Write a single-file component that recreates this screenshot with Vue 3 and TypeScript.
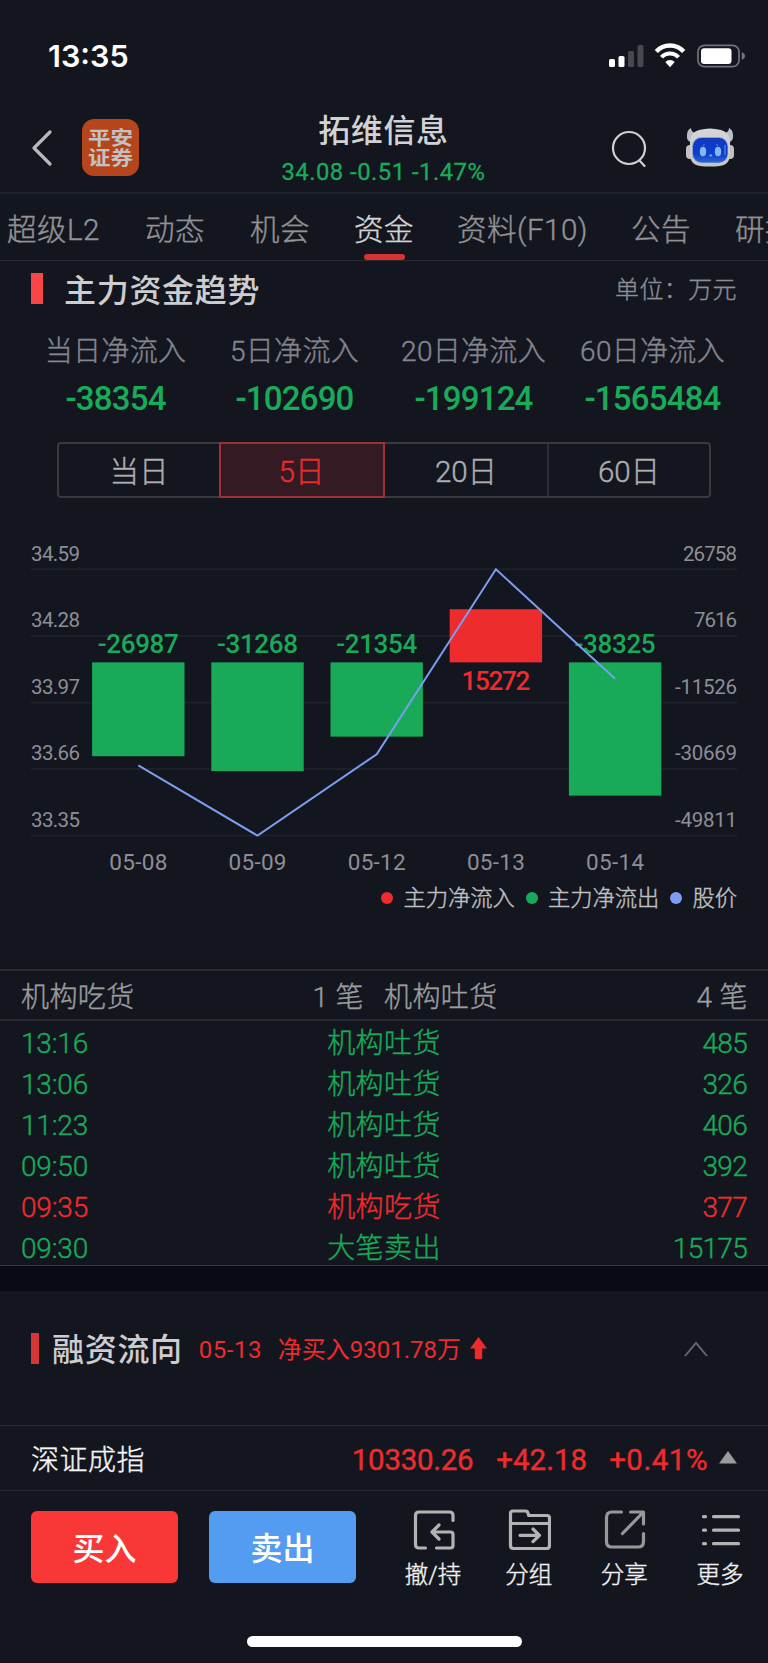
<script setup lang="ts">
interface Stat { label: string; value: string }
interface Bar { date: string; value: number; price: number; labelWidth: number }
interface Deal { time: string; name: string; amount: number; buy?: boolean }

const tabs = [
  { name: '超级L2', width: 93 },
  { name: '动态', width: 60 },
  { name: '机会', width: 59 },
  { name: '资金', width: 58 },
  { name: '资料(F10)', width: 129 },
  { name: '公告', width: 59 },
  { name: '研报', width: 60 },
]
const activeTab = '资金'

const stats: Stat[] = [
  { label: '当日净流入', value: '-38354' },
  { label: '5日净流入', value: '-102690' },
  { label: '20日净流入', value: '-199124' },
  { label: '60日净流入', value: '-1565484' },
]

const ranges = ['当日', '5日', '20日', '60日']
const activeRange = '5日'

const bars: Bar[] = [
  { date: '05-08', value: -26987, price: 33.677, labelWidth: 81 },
  { date: '05-09', value: -31268, price: 33.35, labelWidth: 81 },
  { date: '05-12', value: -21354, price: 33.729, labelWidth: 81 },
  { date: '05-13', value: 15272, price: 34.59, labelWidth: 69 },
  { date: '05-14', value: -38325, price: 34.08, labelWidth: 81 },
]
const axis = [
  { left: '34.59', right: '26758', width: 54 },
  { left: '34.28', right: '7616', width: 43 },
  { left: '33.97', right: '-11526', width: 62 },
  { left: '33.66', right: '-30669', width: 62 },
  { left: '33.35', right: '-49811', width: 62 },
]
const plotTop = 39.3
const plotHeight = 266.3
const rowY = (i: number) => plotTop + (plotHeight / 4) * i
const flowY = (v: number) => plotTop + ((26758 - v) / (26758 + 49811)) * plotHeight
const priceY = (p: number) => plotTop + ((34.59 - p) / 1.24) * plotHeight
const barX = (i: number) => 138.3 + i * 119.2
const zeroY = flowY(0)
const pricePoints = bars.map((b, i) => `${barX(i)},${priceY(b.price)}`).join(' ')

const deals: Deal[] = [
  { time: '13:16', name: '机构吐货', amount: 485 },
  { time: '13:06', name: '机构吐货', amount: 326 },
  { time: '11:23', name: '机构吐货', amount: 406 },
  { time: '09:50', name: '机构吐货', amount: 392 },
  { time: '09:35', name: '机构吃货', amount: 377, buy: true },
  { time: '09:30', name: '大笔卖出', amount: 15175 },
]
</script>

<template>
  <div class="app">
    <div class="status">
      <span class="clock">13:35</span>
      <svg class="status-icons" width="140" height="28" viewBox="0 0 140 28">
        <g fill="#fff">
          <rect x="1" y="17" width="6" height="8" rx="1.600" />
          <rect x="10.500" y="14" width="6" height="11" rx="1.600" />
          <rect x="20" y="9" width="6" height="16" rx="1.600" opacity=".22" />
          <rect x="29.500" y="3" width="6" height="22" rx="1.600" opacity=".22" />
        </g>
        <g fill="none" stroke="#fff">
          <path d="M48.300 9.600a18.500 18.500 0 0 1 27.400 0" stroke-width="4.400" />
          <path d="M53.500 15.300a11.200 11.200 0 0 1 17 0" stroke-width="4" />
        </g>
        <path d="M57.300 19.900a6.700 6.700 0 0 1 9.400 0L62 25.200Z" fill="#fff" />
        <rect x="90" y="3.300" width="41" height="21.400" rx="6.500" fill="none" stroke="#70727a" stroke-width="1.700" />
        <rect x="93" y="6.300" width="30.500" height="15.600" rx="3.200" fill="#fff" />
        <path d="M133.700 10.200q3.300 1 3.300 3.800t-3.300 3.800Z" fill="#70727a" />
      </svg>
    </div>

    <header class="header">
      <svg class="back" width="24" height="40" viewBox="0 0 24 40">
        <path d="M20 4 4 20l16 16" fill="none" stroke="#b9b9bb" stroke-width="3.200" stroke-linecap="round" stroke-linejoin="round" />
      </svg>
      <div class="logo"><p>平安<br>证券</p></div>
      <div class="stock">
        <h1>拓维信息</h1>
        <p>34.08 -0.51 -1.47%</p>
      </div>
      <svg class="search" width="38" height="40" viewBox="0 0 38 40">
        <g fill="none" stroke="#d0d0d2" stroke-width="2.200" stroke-linecap="round">
          <circle cx="18" cy="19" r="16" />
          <path d="m28.500 31.500 5 5.500" />
        </g>
      </svg>
      <svg class="robot" width="50" height="42" viewBox="0 0 50 42">
        <defs>
          <linearGradient id="face" x1="0" y1="0" x2="0" y2="1">
            <stop offset="0" stop-color="#1238c0" />
            <stop offset=".65" stop-color="#0b3fd0" />
            <stop offset="1" stop-color="#2b66d2" />
          </linearGradient>
          <linearGradient id="shell" x1="0" y1="0" x2="0" y2="1">
            <stop offset="0" stop-color="#d6d6d8" />
            <stop offset="1" stop-color="#c6c4c6" />
          </linearGradient>
        </defs>
        <rect x="1" y="18" width="9" height="14" rx="4" fill="#c6bfc1" />
        <rect x="40" y="18" width="9" height="14" rx="4" fill="#c6bfc1" />
        <path d="M2 8Q2 3 6 1 6 6 12 6L9 15Q1 16 2 8ZM48 8Q48 3 44 1 44 6 38 6l3 9q8 1 7-7Z" fill="#b9c0c4" />
        <path d="M14 3Q25 0 36 3 44 5 45 14V29Q44 38 35 39 25 40 15 39 6 38 5 29V14Q6 5 14 3Z" fill="url(#shell)" />
        <rect x="7" y="10" width="36" height="26" rx="9.500" fill="#8ca0c8" />
        <rect x="8" y="11" width="34.500" height="24.500" rx="8.500" fill="url(#face)" />
        <ellipse cx="18" cy="24.500" rx="3.200" ry="4.800" fill="#83b8ed" />
        <ellipse cx="33" cy="24.500" rx="3.200" ry="4.800" fill="#83b8ed" />
        <path d="m18 18.500 1.500-1M31.500 17.500l1.500 1M24.500 28h2.500l-1.200 1.500Z" stroke="#83b8ed" fill="#83b8ed" stroke-width=".8" />
        <path d="M40 18v10" stroke="#4d79df" stroke-width="1.500" />
      </svg>
    </header>

    <nav class="tabs">
      <span
        v-for="t in tabs"
        :key="t.name"
        class="tab"
        :class="{ active: t.name === activeTab }"
        :style="{ width: t.width + 'px' }"
      >{{ t.name }}</span>
    </nav>

    <section class="trend">
      <div class="trend-head">
        <i class="mark"></i>
        <h2>主力资金趋势</h2>
        <span class="unit">单位：万元</span>
      </div>

      <div class="stats">
        <div v-for="s in stats" :key="s.label" class="stat">
          <span class="stat-label">{{ s.label }}</span>
          <span class="stat-value">{{ s.value }}</span>
        </div>
      </div>

      <div class="segments">
        <span v-for="r in ranges" :key="r" class="segment" :class="{ active: r === activeRange }">{{ r }}</span>
      </div>

      <svg class="chart" width="768" height="350" viewBox="0 0 768 350">
        <g v-for="(a, i) in axis" :key="a.left">
          <line x1="31" x2="737" :y1="rowY(i)" :y2="rowY(i)" class="grid" />
          <text x="31" :y="rowY(i) - 8.800" textLength="49" class="axis">{{ a.left }}</text>
          <text :x="737 - a.width" :y="rowY(i) - 8.800" :textLength="a.width" class="axis">{{ a.right }}</text>
        </g>
        <g v-for="(b, i) in bars" :key="b.date">
          <rect
            :x="barX(i) - 46.200"
            :y="Math.min(zeroY, flowY(b.value))"
            width="92.400"
            :height="Math.abs(flowY(b.value) - zeroY)"
            :class="b.value > 0 ? 'in' : 'out'"
          />
          <text
            :x="barX(i) - b.labelWidth / 2"
            :y="b.value > 0 ? 160 : 123"
            :textLength="b.labelWidth"
            class="bar-label"
            :class="b.value > 0 ? 'in' : 'out'"
          >{{ b.value }}</text>
          <text :x="barX(i) - 29" y="339.500" textLength="58" class="date">{{ b.date }}</text>
        </g>
        <polyline :points="pricePoints" class="price" />
      </svg>

      <div class="legend">
        <span class="key red">主力净流入</span>
        <span class="key green">主力净流出</span>
        <span class="key blue">股价</span>
      </div>
    </section>

    <section class="deals">
      <div class="deals-head">
        <div><span>机构吃货</span><span>1 笔</span></div>
        <div><span>机构吐货</span><span>4 笔</span></div>
      </div>
      <div v-for="d in deals" :key="d.time" class="deal" :class="{ buy: d.buy }">
        <span class="time">{{ d.time }}</span>
        <span class="name">{{ d.name }}</span>
        <span class="amount">{{ d.amount }}</span>
      </div>
    </section>

    <section class="margin">
      <i class="mark"></i>
      <h2>融资流向</h2>
      <span class="margin-date">05-13</span>
      <span class="margin-text">净买入9301.78万</span>
      <svg class="up" width="17" height="23" viewBox="0 0 17 23">
        <path d="M8.500 0 17 11.500h-4.800V21q0 1-1 1H5.800q-1 0-1-1v-9.500H0Z" fill="#ee2b2b" />
      </svg>
      <svg class="fold" width="24" height="18" viewBox="0 0 24 18">
        <path d="M1 16 12 3l11 13" fill="none" stroke="#666771" stroke-width="1.900" />
      </svg>
    </section>

    <div class="index">
      <span class="index-name">深证成指</span>
      <span class="index-num a">10330.26</span>
      <span class="index-num b">+42.18</span>
      <span class="index-num c">+0.41%</span>
      <svg width="18" height="13" viewBox="0 0 18 13"><path d="M9 0l9 12.500H0Z" fill="#9b9b9b" /></svg>
    </div>

    <footer class="footer">
      <button class="trade buy-btn">买入</button>
      <button class="trade sell-btn">卖出</button>
      <div class="actions">
        <div class="action">
          <svg width="44" height="42" viewBox="-1.500 -.5 44 42">
            <path d="M40.500 11V6q0-3.500-3.500-3.500H6.500Q3 2.500 3 6v29q0 3.500 3.500 3.500H13M24 38.500h14q2.500 0 2.500-2.500V25q0-2.500-2.500-2.500H20M26.500 15.500l-7 7 7 7" />
          </svg>
          <span>撤/持</span>
        </div>
        <div class="action">
          <svg width="44" height="42" viewBox="-1 -.5 44 42">
            <path d="M2.500 36V4q0-2.500 2.500-2.500h12.500q2 0 2.500 2l.7 2.500H39q2.500 0 2.500 2.500V36q0 3-3 3h-33q-3 0-3-3ZM2.500 14h39M12 25.800h19.500M25 19.500l6.500 6.300-6.500 6.300" />
          </svg>
          <span>分组</span>
        </div>
        <div class="action">
          <svg class="dim" width="44" height="42" viewBox="-1 -.5 44 42">
            <path d="M18.500 2.500H9Q3.500 2.500 3.500 8v24q0 5.500 5.500 5.500h26q5.500 0 5.500-5.500v-8M27.500 2.500h13v12M40 3 19.500 24" />
          </svg>
          <span>分享</span>
        </div>
        <div class="action">
          <svg width="44" height="42" viewBox="-.5 -.5 44 42">
            <path d="M5 7.200h2M15 7.200h25M5 20.700h2M15 20.700h25M5 34.200h2M15 34.200h25" />
          </svg>
          <span>更多</span>
        </div>
      </div>
      <i class="home"></i>
    </footer>
  </div>
</template>

<style>
html, body { background: #13161f; }
</style>

<style scoped>
.app {
  width: 768px;
  height: 1663px;
  overflow: hidden;
  background: #13161f;
  color: #c9c9cb;
  font-family: Roboto, "Noto Sans CJK SC", sans-serif;
  font-weight: 300;
  line-height: 1;
  white-space: nowrap;
  -webkit-text-stroke: .4px;
}
.app * { box-sizing: border-box; }
h1, h2, p { margin: 0; }
svg { display: block; flex: none; }
span { flex: none; }
i { display: block; flex: none; }

.status {
  display: flex;
  justify-content: space-between;
  align-items: center;
  height: 112px;
  padding: 0 20px 0 48px;
}
.clock { font: 600 30.5px/1 Inter, sans-serif; color: #fff; -webkit-text-stroke: 0; }

.header {
  display: flex;
  align-items: center;
  height: 82px;
  padding: 0 33px 8px 30px;
  border-bottom: 2px solid #1e212e;
}
.logo {
  display: flex;
  flex-direction: column;
  justify-content: center;
  width: 57px;
  height: 57px;
  margin: -1px 0 0 28px;
  border-radius: 12px;
  background: #b5461b;
  color: #c4c1c3;
  font-size: 22.500px;
  font-weight: 700;
  text-align: center;
  -webkit-text-stroke: 0;
}
.logo p { line-height: 23px; transform: scaleY(.87); }
.stock { width: 260px; margin-left: 115px; text-align: center; -webkit-text-stroke: 0; }
.stock h1 {
  margin-top: -1px;
  font-size: 32px;
  font-weight: 500;
  line-height: 48px;
  letter-spacing: .6px;
  color: #d2d2d4;
}
.stock p {
  font-size: 23.800px;
  font-weight: 400;
  line-height: 34px;
  letter-spacing: .5px;
  color: #18ac5a;
  -webkit-text-stroke: .3px;
}
.search { margin-left: 98px; margin-top: 1px; }
.robot { margin-left: 36px; }

.tabs {
  display: flex;
  gap: 45px;
  height: 67px;
  padding-left: 7px;
  overflow: hidden;
  border-bottom: 1px solid #2a2d34;
}
.tab {
  font-size: 29.500px;
  letter-spacing: .5px;
  line-height: 72px;
  color: #929294;
}
.tab.active { position: relative; color: #d4d4d6; }
.tab.active::after {
  content: "";
  position: absolute;
  left: 10px;
  top: 60px;
  width: 41px;
  height: 6px;
  border-radius: 3px;
  background: #d83134;
}

h2 {
  font-size: 32px;
  font-weight: 500;
  letter-spacing: .7px;
  color: #cdcdd0;
  -webkit-text-stroke: 0;
}
.trend { height: 708px; }
.trend-head {
  display: flex;
  align-items: center;
  height: 55px;
  padding: 0 31px;
}
.mark { width: 12px; height: 31px; background: #f84545; }
.trend-head h2 { margin-left: 21px; padding-top: 5px; }
.unit { margin-left: auto; padding-top: 3px; font-size: 24px; letter-spacing: .4px; color: #8d8d95; }

.stats { display: flex; height: 126px; padding: 17px 26px 0; }
.stat { display: flex; flex-direction: column; align-items: center; width: 179px; }
.stat-label { font-size: 28px; line-height: 38px; letter-spacing: .3px; color: #85858e; }
.stat-value {
  margin-top: 8px;
  font-size: 33px;
  font-weight: 500;
  line-height: 40px;
  letter-spacing: -.8px;
  color: #18ac5a;
  -webkit-text-stroke: 0;
}

.segments {
  display: flex;
  width: 654px;
  height: 56px;
  margin-left: 57px;
  border: 2px solid #393a3e;
  border-radius: 4px;
}
.segment {
  width: 161px;
  padding-right: 1px;
  font-size: 29.500px;
  line-height: 56px;
  text-align: center;
  color: #aeaeb0;
}
.segment + .segment { width: 163px; border-left: 2px solid #2c2e35; }
.segment:nth-child(3) { border-left-color: transparent; }
.segment + .segment.active {
  width: 166px;
  margin: -2px -1px;
  border: 2px solid #a03037;
  background: #341a22;
  color: #ee2b2d;
  position: relative;
}

.chart { margin-top: 32px; }
.chart text { font-weight: 400; -webkit-text-stroke: 0; }
.grid { stroke: #1e2029; stroke-width: 2; }
.axis { font-size: 20.500px; fill: #8e8e96; }
.date { font-size: 22.500px; fill: #8e8e96; }
.chart .bar-label { font-size: 26px; font-weight: 500; }
.in { fill: #ee2b2d; }
.out { fill: #18aa59; }
.price { fill: none; stroke: #7b9df2; stroke-width: 2; }

.legend {
  display: flex;
  justify-content: flex-end;
  gap: 11px;
  padding-right: 31px;
  font-size: 22.300px;
  line-height: 36px;
  color: #c0c0c3;
}
.key { display: flex; align-items: center; }
.key::before { content: ""; width: 12px; height: 12px; margin-right: 10px; border-radius: 50%; }
.red::before { background: #ee2b2d; }
.green::before { background: #18aa59; }
.blue::before { background: #7b9df2; }

.deals { height: 297px; font-size: 28px; border-bottom: 1px solid #383940; }
.deals-head {
  display: flex;
  height: 52px;
  border-top: 2px solid #2a2b30;
  border-bottom: 2px solid #2a2b30;
  line-height: 54px;
  color: #9c9c9e;
}
.deals-head div { display: flex; justify-content: space-between; width: 384px; padding: 0 20px 0 21px; letter-spacing: .4px; }
.deals-head div + div { padding-left: 0; }
.deal {
  display: grid;
  grid-template-columns: 1fr 1fr 1fr;
  height: 41px;
  padding: 0 21px;
  line-height: 46px;
  color: #18aa59;
}
.buy { color: #ee2b2d; }
.time { letter-spacing: -.2px; }
.name { text-align: center; letter-spacing: .4px; }
.amount { text-align: right; letter-spacing: -.7px; }

.margin {
  display: flex;
  align-items: center;
  height: 159px;
  padding: 28px 60px 25px 31px;
  background: linear-gradient(#0a0a14 25px, #13161f 25px);
}
.margin .mark { width: 8px; margin-top: 3px; background: #d53638; }
.margin h2 { margin-left: 13px; padding-top: 6px; }
.margin-date, .margin-text { font-size: 24px; font-weight: 400; padding-top: 5px; color: #ee2b2d; -webkit-text-stroke: 0; }
.margin-date { width: 63px; margin-left: 16px; letter-spacing: .5px; }
.margin-text { margin-left: 16px; }
.up { margin-left: 9px; margin-top: 2px; }
.fold { margin-left: auto; margin-top: 3px; }

.index {
  display: flex;
  align-items: center;
  height: 66px;
  padding: 0 31px;
  border-top: 1px solid #2a2c37;
  border-bottom: 1px solid #252731;
}
.index-name { font-size: 28px; letter-spacing: .5px; padding-top: 5px; color: #f4f4f4; }
.index-num { font-size: 29.500px; font-weight: 400; padding-top: 5px; color: #ee2b2d; }
.a { margin-left: auto; letter-spacing: -.3px; }
.b { margin-left: 23px; }
.c { margin-left: 22px; letter-spacing: .5px; }
.index svg { margin-left: 11px; margin-top: -2px; }

.footer { position: relative; display: flex; align-items: flex-start; height: 172px; padding: 20px 18px 0 31px; }
.trade {
  width: 147px;
  height: 72px;
  margin: 0 31px 0 0;
  padding: 4px 0 0;
  border: 0;
  border-radius: 6px;
  background: #f93737;
  color: #fff;
  font: 500 32px/1 Roboto, "Noto Sans CJK SC", sans-serif;
  -webkit-text-stroke: 0;
}
.sell-btn { background: #549bf2; margin-right: 0; }
.actions { display: flex; justify-content: space-between; width: 347px; margin-left: auto; margin-top: -2px; }
.action { display: flex; flex-direction: column; align-items: center; width: 60px; font-size: 23.500px; color: #f1f1f1; }
.action span { margin-top: 13px; }
.action path { fill: none; stroke: #b3b3b4; stroke-width: 3.200; stroke-linecap: round; stroke-linejoin: round; }
.action .dim path { stroke: #98989a; }
.home { position: absolute; left: 247px; bottom: 16px; width: 275px; height: 11px; border-radius: 6px; background: #fff; }
</style>
